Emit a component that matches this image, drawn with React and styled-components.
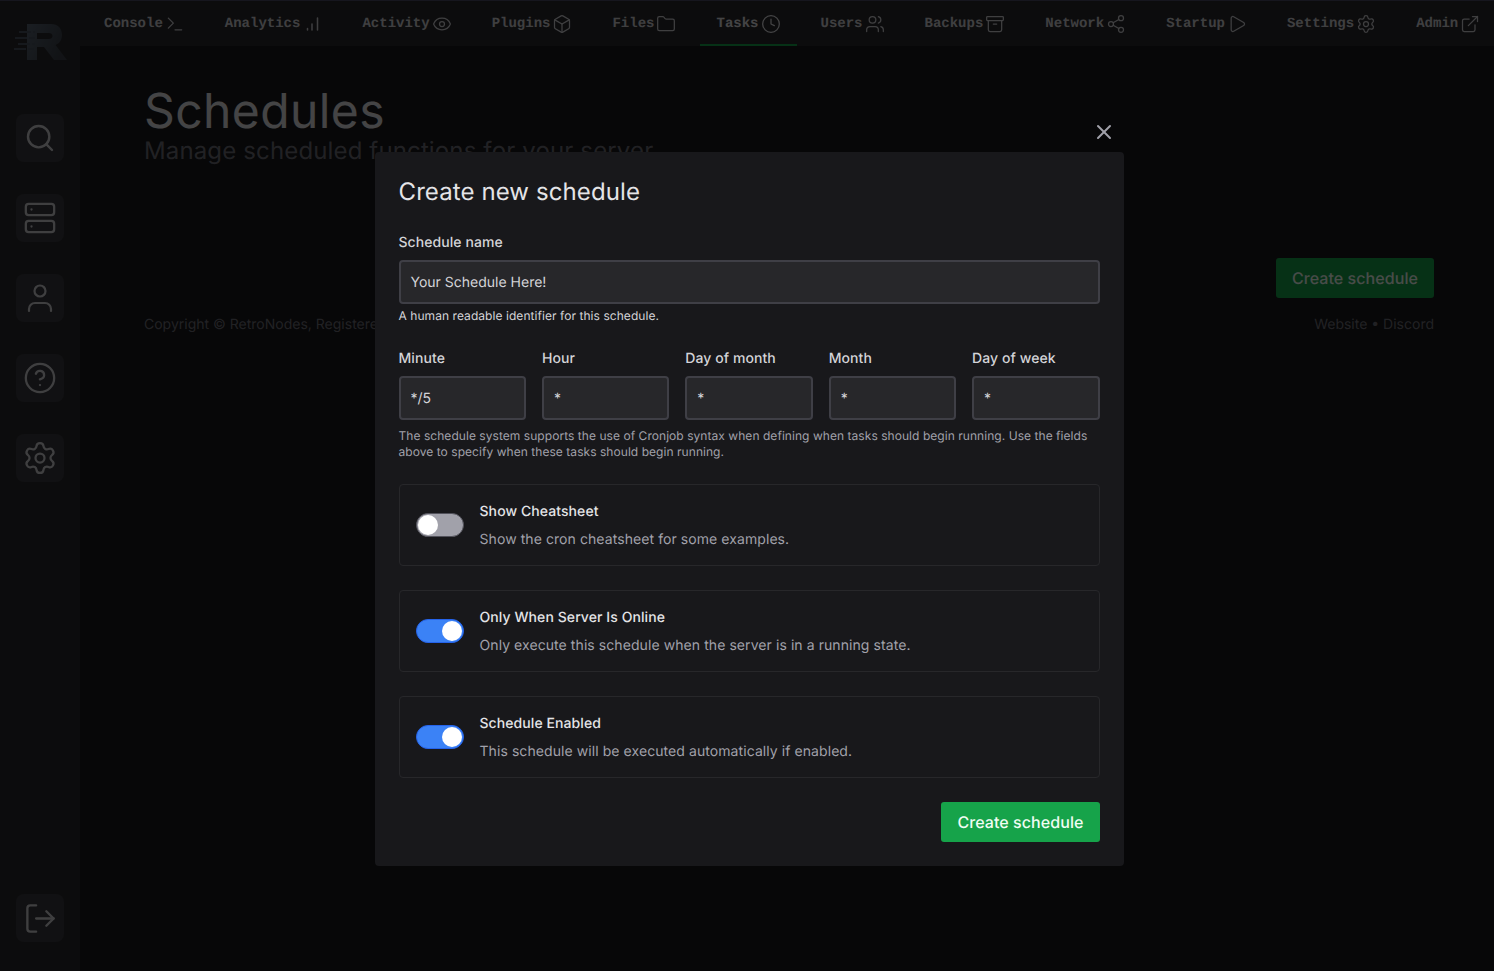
import React from 'react'
import styled, { createGlobalStyle } from 'styled-components'
import {
  Terminal,
  Eye,
  Box,
  Folder,
  Clock,
  Users,
  Archive,
  Share2,
  Play,
  Settings,
  ExternalLink,
  Search,
  Server,
  HelpCircle,
  LogOut,
  X,
} from 'lucide-react'

const GlobalStyle = createGlobalStyle`
  html, body {
    margin: 0;
    height: 100%;
    background: #18181b;
    overflow: hidden;
  }
  * {
    box-sizing: border-box;
  }
  body {
    font-family: Inter, "Liberation Sans", sans-serif;
    text-rendering: geometricPrecision;
  }
`

function Bars({ size = 20, strokeWidth = 1.5 }) {
  return (
    <svg
      width={size}
      height={size}
      viewBox='0 0 20 20'
      fill='none'
      stroke='currentColor'
      strokeWidth={strokeWidth}
      strokeLinecap='round'
    >
      <path d='M5.500 16v-1.500M10 16v-6M15.500 16V4' />
    </svg>
  )
}

function Person() {
  return (
    <svg
      width='32'
      height='32'
      viewBox='0 0 32 32'
      fill='none'
      stroke='currentColor'
      strokeWidth='2.200'
      strokeLinecap='round'
    >
      <circle cx='16' cy='9' r='5.500' />
      <path d='M5 29v-2a6 6 0 0 1 6-6h10a6 6 0 0 1 6 6v2' />
    </svg>
  )
}

const tabs = [
  { label: 'Console', icon: Terminal },
  { label: 'Analytics', icon: Bars },
  { label: 'Activity', icon: Eye },
  { label: 'Plugins', icon: Box },
  { label: 'Files', icon: Folder },
  { label: 'Tasks', icon: Clock, active: true },
  { label: 'Users', icon: Users },
  { label: 'Backups', icon: Archive },
  { label: 'Network', icon: Share2 },
  { label: 'Startup', icon: Play },
  { label: 'Settings', icon: Settings },
  { label: 'Admin', icon: ExternalLink },
]

const cronFields = [
  { label: 'Minute', value: '*/5' },
  { label: 'Hour', value: '*' },
  { label: 'Day of month', value: '*' },
  { label: 'Month', value: '*' },
  { label: 'Day of week', value: '*' },
]

const switches = [
  {
    title: 'Show Cheatsheet',
    text: 'Show the cron cheatsheet for some examples.',
    on: false,
  },
  {
    title: 'Only When Server Is Online',
    text: 'Only execute this schedule when the server is in a running state.',
    on: true,
  },
  {
    title: 'Schedule Enabled',
    text: 'This schedule will be executed automatically if enabled.',
    on: true,
  },
]

function Logo() {
  return (
    <svg width='56' height='40' viewBox='0 0 56 40' fill='none'>
      <defs>
        <linearGradient id='logoFill' x1='0' y1='0' x2='1' y2='0.4'>
          <stop offset='0' stopColor='#5a6675' />
          <stop offset='1' stopColor='#3c424a' />
        </linearGradient>
      </defs>
      <path
        d='M14 1h24c7 0 11 4.500 11 11 0 5-2.500 8.500-6.500 10L54 37H41l-10-13h-7v13H14z M24 10v6h12c2 0 3.500-1 3.500-3s-1.500-3-3.500-3z'
        fill='url(#logoFill)'
        fillRule='evenodd'
      />
      <path
        d='M6 9h16M2 15h20M5 21h17M1 26h20'
        stroke='#4a5563'
        strokeWidth='2'
        strokeDasharray='12 2 8 2'
      />
    </svg>
  )
}

export default function App() {
  return (
    <>
      <GlobalStyle />
      <Shell>
        <Sidebar>
          <LogoSlot>
            <Logo />
          </LogoSlot>
          <SideGroup>
            <SideButton><Search size={32} strokeWidth={1.8} /></SideButton>
            <SideButton><Server size={34} strokeWidth={1.6} /></SideButton>
            <SideButton><Person /></SideButton>
            <SideButton><HelpCircle size={34} strokeWidth={1.6} /></SideButton>
            <SideButton><Settings size={36} strokeWidth={1.5} /></SideButton>
          </SideGroup>
          <SideButton><LogOut size={35} strokeWidth={1.6} /></SideButton>
        </Sidebar>
        <Column>
          <TopBar>
            {tabs.map(({ label, icon: Icon, active }) => (
              <Tab key={label} $active={active}>
                {label}
                <Icon size={20} strokeWidth={1.5} />
              </Tab>
            ))}
          </TopBar>
          <Main>
            <Title>Schedules</Title>
            <Subtitle>Manage scheduled functions for your server</Subtitle>
            <PageActions>
              <GreenButton>Create schedule</GreenButton>
            </PageActions>
            <Footer>
              <span>Copyright © RetroNodes, Registered Trademark</span>
              <span>Website • Discord</span>
            </Footer>
          </Main>
        </Column>
      </Shell>
      <Overlay>
        <CloseRow>
          <X size={24} strokeWidth={2} />
        </CloseRow>
        <Modal>
          <ModalTitle>Create new schedule</ModalTitle>
          <Label>Schedule name</Label>
          <Field>Your Schedule Here!</Field>
          <NameHelp>A human readable identifier for this schedule.</NameHelp>
          <CronGrid>
            {cronFields.map((field) => (
              <div key={field.label}>
                <Label>{field.label}</Label>
                <Field>{field.value}</Field>
              </div>
            ))}
          </CronGrid>
          <CronHelp>
            The schedule system supports the use of Cronjob syntax when defining
            when tasks should begin running. Use the fields above to specify
            when these tasks should begin running.
          </CronHelp>
          <Switches>
            {switches.map((item) => (
              <SwitchCard key={item.title}>
                <Track $on={item.on}>
                  <Knob />
                </Track>
                <SwitchCopy>
                  <SwitchTitle>{item.title}</SwitchTitle>
                  <SwitchText>{item.text}</SwitchText>
                </SwitchCopy>
              </SwitchCard>
            ))}
          </Switches>
          <ModalActions>
            <GreenButton>Create schedule</GreenButton>
          </ModalActions>
        </Modal>
      </Overlay>
    </>
  )
}

const Shell = styled.div`
  display: flex;
  height: 971px;
  border-top: 1px solid #4a4a66;
  background: #18181b;
`
const Sidebar = styled.aside`
  width: 80px;
  flex-shrink: 0;
  display: flex;
  flex-direction: column;
  align-items: center;
  padding-bottom: 29px;
  background: #2a2a2e;
`
const LogoSlot = styled.div`
  height: 113px;
  width: 100%;
  padding: 22px 0 0 13px;
`
const SideGroup = styled.div`
  display: flex;
  flex-direction: column;
  gap: 32px;
  flex: 1;
`
const SideButton = styled.div`
  width: 48px;
  height: 48px;
  border-radius: 8px;
  display: flex;
  align-items: center;
  justify-content: center;
  background: #3a3a40;
  color: #d4d4d8;
`
const Column = styled.div`
  flex: 1;
  min-width: 0;
  display: flex;
  flex-direction: column;
`
const TopBar = styled.nav`
  height: 45px;
  display: flex;
  gap: 8px;
  padding-left: 8px;
  background: #2a2a2e;
`
const Tab = styled.a`
  display: flex;
  align-items: center;
  gap: 2px;
  height: 45px;
  padding: 3px 16px 0;
  font-family: "Liberation Mono", monospace;
  font-size: 14px;
  font-weight: 700;
  white-space: nowrap;
  color: ${(p) => (p.$active ? '#e4e4e7' : '#d4d4d8')};
  border-bottom: 2px solid ${(p) => (p.$active ? '#16a34a' : 'transparent')};
`
const Main = styled.main`
  flex: 1;
  padding: 41px 60px 0 64px;
`
const Title = styled.h1`
  margin: 0;
  font-size: 48px;
  line-height: 48px;
  font-weight: 400;
  letter-spacing: 0.4px;
  color: #e4e4e7;
`
const Subtitle = styled.p`
  margin: 0;
  font-size: 24px;
  line-height: 32px;
  letter-spacing: 0.14px;
  color: #71717a;
`
const PageActions = styled.div`
  display: flex;
  justify-content: flex-end;
  margin-top: 91px;
`
const GreenButton = styled.button`
  height: 40px;
  padding: 0 16px;
  border: 0;
  border-radius: 3px;
  background: #16a34a;
  color: #f0fdf4;
  font-family: inherit;
  font-size: 16px;
  font-weight: 500;
  letter-spacing: 0.07px;
  text-rendering: geometricPrecision;
`
const Footer = styled.footer`
  display: flex;
  justify-content: space-between;
  margin-top: 17px;
  font-size: 14px;
  line-height: 20px;
  color: #71717a;
`
const Overlay = styled.div`
  position: fixed;
  inset: 0;
  display: flex;
  flex-direction: column;
  align-items: center;
  justify-content: center;
  padding: 0 0 1px 4px;
  background: rgba(0, 0, 0, 0.7);
`
const CloseRow = styled.div`
  width: 749px;
  height: 48px;
  display: flex;
  justify-content: flex-end;
  padding: 16px 8px 0 0;
  color: #a1a1aa;
`
const Modal = styled.section`
  width: 749px;
  padding: 24px;
  border-radius: 4px;
  background: #18181b;
`
const ModalTitle = styled.h2`
  margin: 0 0 24px;
  font-size: 24px;
  line-height: 32px;
  font-weight: 400;
  letter-spacing: 0.1px;
  color: #e4e4e7;
`
const Label = styled.label`
  display: block;
  padding-top: 1px;
  margin-bottom: 7px;
  font-size: 14px;
  line-height: 20px;
  font-weight: 500;
  letter-spacing: 0.07px;
  color: #d4d4d8;
`
const Field = styled.div`
  height: 44px;
  padding: 0 10px;
  display: flex;
  align-items: center;
  border: 2px solid #3f3f46;
  border-radius: 4px;
  background: #27272a;
  font-size: 14px;
  color: #d4d4d8;
`
const NameHelp = styled.p`
  margin: 4px 0 24px;
  font-size: 12px;
  line-height: 16px;
  letter-spacing: 0.06px;
  color: #d4d4d8;
`
const CronGrid = styled.div`
  display: grid;
  grid-template-columns: repeat(5, 1fr);
  gap: 16px;
`
const CronHelp = styled.p`
  margin: 8px 0 24px;
  font-size: 12px;
  line-height: 16px;
  letter-spacing: 0.05px;
  color: #a1a1aa;
`
const Switches = styled.div`
  display: flex;
  flex-direction: column;
  gap: 24px;
`
const SwitchCard = styled.div`
  height: 82px;
  padding: 16px;
  display: flex;
  align-items: center;
  gap: 16px;
  border: 1px solid #27272a;
  border-radius: 4px;
`
const Track = styled.span`
  width: 48px;
  height: 24px;
  flex-shrink: 0;
  display: flex;
  align-items: center;
  justify-content: ${(p) => (p.$on ? 'flex-end' : 'flex-start')};
  padding: 0 1px;
  border: 1px solid ${(p) => (p.$on ? '#2563eb' : '#52525b')};
  border-radius: 12px;
  background: ${(p) => (p.$on ? '#3b82f6' : '#a1a1aa')};
`
const Knob = styled.span`
  width: 20px;
  height: 20px;
  border-radius: 50%;
  background: #fff;
`
const SwitchCopy = styled.div`
  padding-top: 2px;
`
const SwitchTitle = styled.div`
  font-size: 14px;
  line-height: 20px;
  font-weight: 500;
  letter-spacing: 0.08px;
  color: #e4e4e7;
`
const SwitchText = styled.div`
  margin-top: 8px;
  font-size: 14px;
  line-height: 20px;
  letter-spacing: 0.075px;
  color: #a1a1aa;
`
const ModalActions = styled.div`
  display: flex;
  justify-content: flex-end;
  margin-top: 24px;
`
